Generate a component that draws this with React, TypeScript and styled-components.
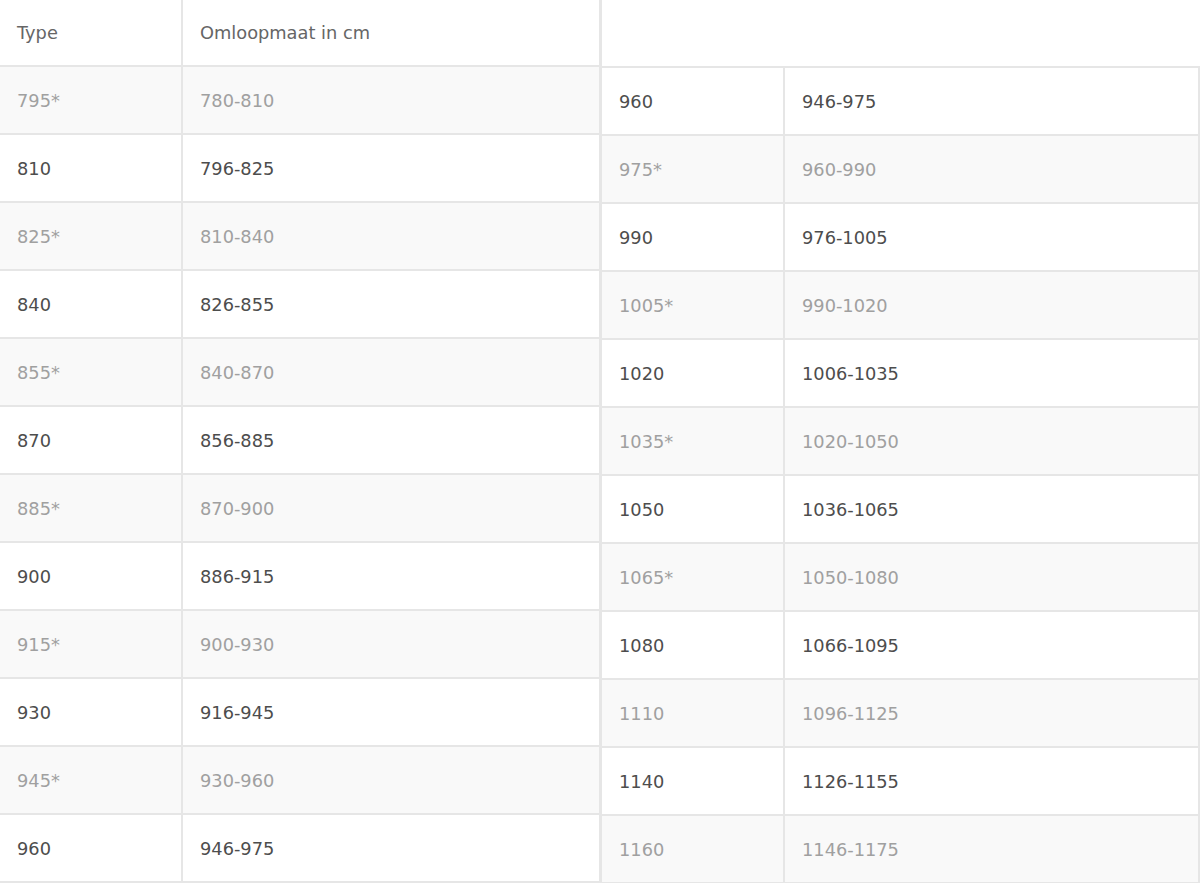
import * as React from 'react';
import styled, { createGlobalStyle } from 'styled-components';

const GlobalStyle = createGlobalStyle`
    html, body {
        margin: 0;
        padding: 0;
        background: #ffffff;
    }
    body {
        font-family: "DejaVu Sans", Verdana, sans-serif;
    }
`;

const Page = styled.div`
    display: flex;
    width: 1200px;
    height: 883px;
    overflow: hidden;
`;

const Half = styled.div<{ offset?: number }>`
    width: 600px;
    padding-top: ${props => props.offset || 0}px;
    border-left: ${props => props.offset ? '2px solid #e6e6e6' : 'none'};
    box-sizing: border-box;
`;

const Table = styled.table<{ topLine?: boolean }>`
    width: 100%;
    border-collapse: collapse;
    table-layout: fixed;
    border-top: ${props => props.topLine ? '2px solid #e6e6e6' : 'none'};
`;

const HeadCell = styled.th<{ width: number }>`
    width: ${props => props.width}px;
    height: 66px;
    padding: 0 0 0 17px;
    text-align: left;
    font-weight: 400;
    font-size: 17.8px;
    color: #666666;
    border-right: 2px solid #e6e6e6;
    border-bottom: 2px solid #e6e6e6;
    box-sizing: border-box;
`;

const Row = styled.tr<{ muted: boolean }>`
    background: ${props => props.muted ? '#f9f9f9' : '#ffffff'};
    color: ${props => props.muted ? '#a0a0a0' : '#4d4d4d'};
`;

const Cell = styled.td<{ width?: number }>`
    ${props => props.width ? `width: ${props.width}px;` : ''}
    height: 68px;
    padding: 0 0 0 17px;
    font-size: 17.8px;
    border: 2px solid #e6e6e6;
    border-left: none;
    border-top: none;
    box-sizing: border-box;
`;

type Entry = [string, string];

const left: Entry[] = [
    ['795*', '780-810'],
    ['810', '796-825'],
    ['825*', '810-840'],
    ['840', '826-855'],
    ['855*', '840-870'],
    ['870', '856-885'],
    ['885*', '870-900'],
    ['900', '886-915'],
    ['915*', '900-930'],
    ['930', '916-945'],
    ['945*', '930-960'],
    ['960', '946-975'],
];

const right: Entry[] = [
    ['960', '946-975'],
    ['975*', '960-990'],
    ['990', '976-1005'],
    ['1005*', '990-1020'],
    ['1020', '1006-1035'],
    ['1035*', '1020-1050'],
    ['1050', '1036-1065'],
    ['1065*', '1050-1080'],
    ['1080', '1066-1095'],
    ['1110', '1096-1125'],
    ['1140', '1126-1155'],
    ['1160', '1146-1175'],
];

const App = () => {
    return (
        <Page>
            <GlobalStyle />
            <Half>
                <Table>
                    <thead>
                        <tr>
                            <HeadCell width={182}>Type</HeadCell>
                            <HeadCell width={418}>Omloopmaat in cm</HeadCell>
                        </tr>
                    </thead>
                    <tbody>
                        {left.map(([type, size], i) => (
                            <Row key={type} muted={i % 2 === 0}>
                                <Cell width={182}>{type}</Cell>
                                <Cell>{size}</Cell>
                            </Row>
                        ))}
                    </tbody>
                </Table>
            </Half>
            <Half offset={66}>
                <Table topLine>
                    <tbody>
                        {right.map(([type, size], i) => (
                            <Row key={type} muted={i % 2 === 1}>
                                <Cell width={182}>{type}</Cell>
                                <Cell>{size}</Cell>
                            </Row>
                        ))}
                    </tbody>
                </Table>
            </Half>
        </Page>
    );
};

export default App;
